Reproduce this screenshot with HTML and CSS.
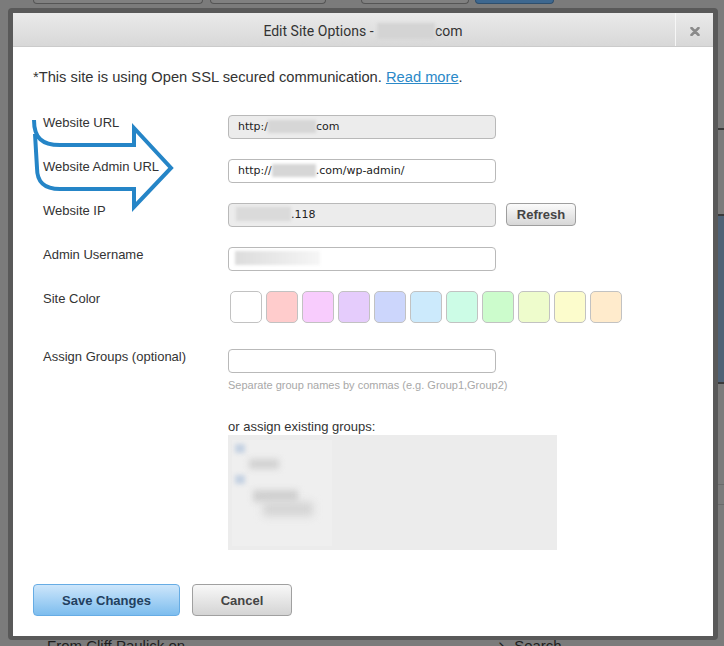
FILE: index.html
```html
<!DOCTYPE html>
<html lang="en">
<head>
    <meta charset="UTF-8">
    <meta name="viewport" content="width=device-width, initial-scale=1.0">
    <title>Edit Site Options</title>
    <link rel="stylesheet" href="styles.css">
</head>
<body>
    <!-- Page behind the modal (dimmed) -->
    <div class="backdrop">
        <div class="bg-toolbar">
            <span class="bg-btn bg-btn-1"></span>
            <span class="bg-btn bg-btn-2"></span>
            <span class="bg-btn bg-btn-3"></span>
            <span class="bg-btn bg-btn-blue"></span>
        </div>
        <div class="bg-main">
            <div class="bg-left"></div>
            <div class="bg-side">
                <div class="bg-rule"></div>
                <div class="bg-chart"></div>
                <div class="bg-line"></div>
                <div class="bg-line"></div>
            </div>
        </div>
        <div class="bg-footer">
            <span class="bg-footer-text">From Cliff Paulick on</span>
            <span class="bg-search">&#8600; Search</span>
        </div>
    </div>

    <!-- Modal -->
    <div class="modal">
        <div class="modal-header">
            <h2 class="modal-title">Edit Site Options - <span class="blur blur-title"></span>com</h2>
            <button class="modal-close" type="button">
                <svg width="10" height="9" viewBox="0 0 10 9">
                    <path d="M1.5 1 L8.5 8 M8.5 1 L1.5 8" stroke="#8a8a8a" stroke-width="2.5" stroke-linecap="round" />
                </svg>
            </button>
        </div>

        <div class="modal-body">
            <p class="notice">*This site is using Open SSL secured communication. <a href="#">Read more</a>.</p>

            <div class="form-row">
                <label class="form-label">Website URL</label>
                <div class="input input-readonly">http:/<span class="blur blur-input"></span>com</div>
            </div>

            <div class="form-row">
                <label class="form-label">Website Admin URL</label>
                <div class="input">http://<span class="blur blur-input-2"></span>.com/wp-admin/</div>
            </div>

            <div class="form-row">
                <label class="form-label">Website IP</label>
                <div class="input input-readonly"><span class="blur blur-ip"></span>.118</div>
                <button class="btn btn-small" type="button">Refresh</button>
            </div>

            <div class="form-row">
                <label class="form-label">Admin Username</label>
                <div class="input"><span class="blur blur-user"></span></div>
            </div>

            <div class="form-row row-colors">
                <label class="form-label">Site Color</label>
                <div class="swatches">
                    <span class="swatch" style="background:#ffffff"></span>
                    <span class="swatch" style="background:#ffcccc"></span>
                    <span class="swatch" style="background:#f8ccfd"></span>
                    <span class="swatch" style="background:#e5ccfc"></span>
                    <span class="swatch" style="background:#ccd6fc"></span>
                    <span class="swatch" style="background:#cceafc"></span>
                    <span class="swatch" style="background:#ccfce6"></span>
                    <span class="swatch" style="background:#ccfccc"></span>
                    <span class="swatch" style="background:#eefccc"></span>
                    <span class="swatch" style="background:#fcfccc"></span>
                    <span class="swatch" style="background:#ffebcc"></span>
                </div>
            </div>

            <div class="form-row row-groups">
                <label class="form-label">Assign Groups (optional)</label>
                <div class="field-stack">
                    <div class="input"></div>
                    <p class="hint">Separate group names by commas (e.g. Group1,Group2)</p>
                    <p class="sub-label">or assign existing groups:</p>
                    <div class="groups-box">
                        <div class="groups-list">
                            <span class="blur blur-check"></span>
                            <span class="blur blur-g1"></span>
                            <span class="blur blur-check"></span>
                            <span class="blur blur-g2"></span>
                            <span class="blur blur-g3"></span>
                        </div>
                    </div>
                </div>
            </div>
        </div>

        <div class="modal-footer">
            <button class="btn btn-primary" type="button">Save Changes</button>
            <button class="btn btn-cancel" type="button">Cancel</button>
        </div>
    </div>

    <!-- Hand-drawn annotation arrow -->
    <svg class="arrow" viewBox="28 116 150 97" width="150" height="97">
        <path d="M34 120 C34 138 42 145 60 145 L134 145 L134 128 L171 168 L134 207 L134 189 L60 189 C44 189 37 182 37 168 L35 134"
              fill="none" stroke="#2585c7" stroke-width="4" stroke-linejoin="miter" />
    </svg>
</body>
</html>
```

FILE: styles.css
```css
* {
    margin: 0;
    padding: 0;
    box-sizing: border-box;
}

body {
    width: 724px;
    height: 646px;
    overflow: hidden;
    position: relative;
    background: #7b7b7b;
    font-family: 'Liberation Sans', Arial, sans-serif;
    color: #333;
}

/* ---- dimmed page behind ---- */

.backdrop {
    display: flex;
    flex-direction: column;
    height: 100%;
}

.bg-toolbar {
    display: flex;
    height: 4px;
    padding-left: 33px;
}

.bg-btn {
    height: 4px;
    background: #808080;
    border: 1px solid #555;
    border-top: 0;
    border-radius: 0 0 4px 4px;
}

.bg-btn-1 { width: 170px; }
.bg-btn-2 { width: 116px; margin-left: 7px; }
.bg-btn-3 { width: 108px; margin-left: 35px; }
.bg-btn-blue { width: 79px; margin-left: 6px; background: #3e6890; border-color: #2f4f6d; }

.bg-main {
    flex: 1;
    display: flex;
}

.bg-left {
    flex: 1;
}

.bg-side {
    width: 6px;
    padding-top: 124px;
}

.bg-rule {
    height: 2px;
    background: #3a3a3a;
}

.bg-chart {
    height: 170px;
    margin-top: 84px;
    background: #4f6276;
    border-top: 2px solid #3a3a3a;
    border-bottom: 2px solid #3a3a3a;
}

.bg-line {
    height: 1px;
    background: #6a6a6a;
    margin-top: 100px;
}

.bg-line + .bg-line {
    margin-top: 19px;
}

.bg-footer {
    height: 9px;
    display: flex;
    overflow: hidden;
    padding-left: 47px;
    font-size: 15px;
    line-height: 18px;
    color: #1e1e1e;
}

.bg-footer-text {
    width: 450px;
}

.bg-search {
    color: #1e1e1e;
}

/* ---- modal ---- */

.modal {
    position: absolute;
    top: 8px;
    left: 8px;
    width: 710px;
    height: 632px;
    border: 5px solid #595959;
    border-bottom-width: 4px;
    border-radius: 4px;
    background: #fff;
    display: flex;
    flex-direction: column;
}

.modal-header {
    position: relative;
    height: 34px;
    background: linear-gradient(#eaeaea, #d8d8d8);
    border-bottom: 1px solid #cbcbcb;
}

.modal-title {
    font-family: Roboto, 'Liberation Sans', sans-serif;
    font-size: 14px;
    font-weight: normal;
    line-height: 32px;
    padding-top: 2px;
    text-align: center;
    color: #333;
}

.modal-close {
    position: absolute;
    top: 0;
    right: 0;
    width: 38px;
    height: 33px;
    padding-top: 3px;
    border: 0;
    border-left: 1px solid #f6f6f6;
    background: transparent;
    display: flex;
    align-items: center;
    justify-content: center;
}

.modal-body {
    flex: 1;
    padding: 21px 20px 0 20px;
}

.notice {
    font-size: 14.7px;
    line-height: 18px;
    color: #333;
    margin-bottom: 29px;
}

.notice a {
    color: #2b89c8;
}

.form-row {
    display: flex;
    align-items: flex-start;
    padding-left: 10px;
    margin-bottom: 20px;
}

.form-label {
    width: 185px;
    flex-shrink: 0;
    font-size: 13px;
    line-height: 15px;
    color: #333;
}

.input {
    width: 268px;
    height: 24px;
    border: 1px solid #b9b9b9;
    border-radius: 4px;
    background: #fff;
    padding-left: 9px;
    font-family: 'DejaVu Sans', Verdana, sans-serif;
    font-size: 11px;
    line-height: 22px;
    color: #222;
    white-space: nowrap;
}

.input-readonly {
    background: #ececec;
}

.blur {
    display: inline-block;
    vertical-align: middle;
    background: #d6d6d6;
    filter: blur(1.5px);
}

.blur-title { width: 58px; height: 16px; background: #d4d4d4; margin-top: -3px; }
.blur-input { width: 48px; height: 13px; margin-top: -2px; }
.blur-input-2 { width: 44px; height: 13px; margin-top: -2px; }
.blur-ip { width: 55px; height: 14px; margin: -2px 0 0 -2px; background: #dadada; }
.blur-user { width: 85px; height: 14px; margin: -2px 0 0 -3px; background: linear-gradient(90deg, #dcdcdc, #f6f6f6); }

.btn {
    font-family: 'Liberation Sans', Arial, sans-serif;
    font-weight: bold;
    font-size: 13px;
    color: #444;
    border-radius: 4px;
}

.btn-small {
    width: 70px;
    height: 23px;
    margin-left: 10px;
    border: 1px solid #9e9e9e;
    background: linear-gradient(#fbfbfb, #d7d7d7);
}

.row-colors {
    margin-bottom: 26px;
}

.swatches {
    display: flex;
    gap: 4px;
    padding-left: 2px;
}

.swatch {
    width: 32px;
    height: 32px;
    border: 1px solid #c2c2c2;
    border-radius: 5px;
}

.field-stack {
    display: flex;
    flex-direction: column;
}

.hint {
    font-size: 11px;
    line-height: 13px;
    color: #a8a8a8;
    margin-top: 6px;
}

.sub-label {
    font-size: 13px;
    line-height: 15px;
    color: #333;
    margin-top: 27px;
}

.groups-box {
    width: 329px;
    height: 115px;
    margin-top: 1px;
    background: #ececec;
    padding: 5px 0 0 4px;
}

.groups-list {
    width: 100px;
    height: 106px;
    background: #efefef;
    display: flex;
    flex-direction: column;
    align-items: flex-start;
    gap: 6px;
    padding: 4px 0 0 3px;
}

.blur-check { width: 10px; height: 9px; background: #c5d2e2; filter: blur(2px); }
.blur-g1 { width: 30px; height: 10px; margin-left: 14px; background: #d2d2d2; filter: blur(3px); }
.blur-g2 { width: 45px; height: 12px; margin-left: 18px; background: #d0d0d0; filter: blur(3px); }
.blur-g3 { width: 50px; height: 14px; margin: -6px 0 0 28px; background: #d4d4d4; filter: blur(4px); }

.modal-footer {
    display: flex;
    gap: 12px;
    padding: 0 0 20px 20px;
}

.btn-primary {
    width: 147px;
    height: 32px;
    border: 1px solid #66ace4;
    background: linear-gradient(#cde6fb, #7dbdee);
    color: #22405f;
}

.btn-cancel {
    width: 100px;
    height: 32px;
    border: 1px solid #a0a0a0;
    background: linear-gradient(#f8f8f8, #d4d4d4);
    color: #444;
}

.arrow {
    position: absolute;
    left: 28px;
    top: 116px;
    pointer-events: none;
}
```
